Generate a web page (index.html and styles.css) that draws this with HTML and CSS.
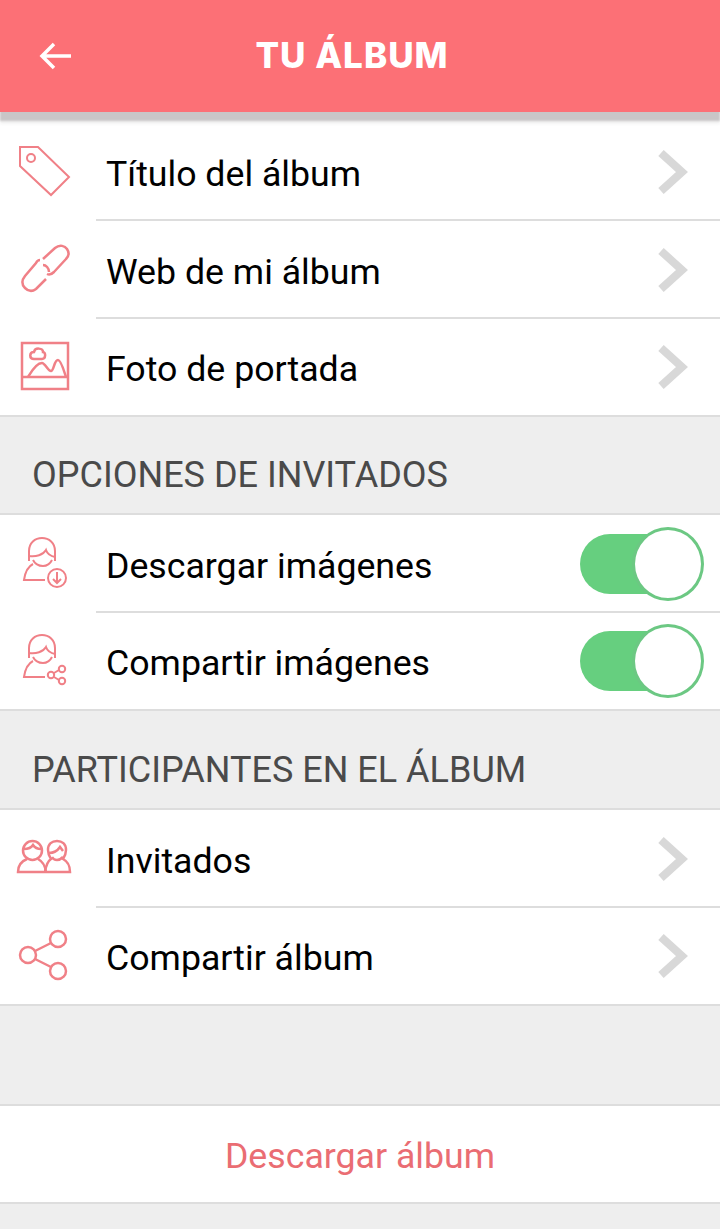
FILE: index.html
```html
<!DOCTYPE html>
<html lang="es">
<head>
  <meta charset="UTF-8" />
  <meta name="viewport" content="width=device-width, initial-scale=1.0" />
  <title>Tu álbum</title>
  <link rel="stylesheet" href="styles.css">
</head>
<body>
  <header class="topbar">
    <svg class="back" viewBox="0 0 34 30"><path d="M32 15H3M15 3L3 15l12 12"/></svg>
    <h1>TU ÁLBUM</h1>
  </header>

  <ul class="list">
    <li class="row">
      <svg class="icon" viewBox="0 0 60 60"><path d="M6 5h18l31 30-18 18L6 24z"/><circle cx="17" cy="16" r="4"/></svg>
      <span class="label">Título del álbum</span>
      <svg class="chevron" viewBox="0 0 32 46"><path d="M4 4l21 19L4 42"/></svg>
    </li>
    <li class="row">
      <svg class="icon icon-bold" viewBox="0 0 60 60"><path d="M29 19L41 8c5-4 10-2 12 1s2 7-1 10L40 32c-2 2-5 3-7 2"/><path d="M29 25c3 0 6 3 6 7"/><path d="M26 20c-2 0-3 1-4 3L11 36c-4 5-3 9 0 12s7 4 11 1l10-10"/></svg>
      <span class="label">Web de mi álbum</span>
      <svg class="chevron" viewBox="0 0 32 46"><path d="M4 4l21 19L4 42"/></svg>
    </li>
    <li class="row">
      <svg class="icon icon-bold" viewBox="0 0 60 60"><path d="M8 6h46v46H8zM8 40h46"/><path d="M14 40c3-5 8-14 14-14 3 0 6 8 9 8 3 0 3-11 7-11 3 0 6 11 8 17"/><path d="M20 22c-5 0-5-7 0-7 1-5 9-4 9 0 3 0 3 7-1 7z"/></svg>
      <span class="label">Foto de portada</span>
      <svg class="chevron" viewBox="0 0 32 46"><path d="M4 4l21 19L4 42"/></svg>
    </li>
  </ul>

  <h2 class="section section-tight">OPCIONES DE INVITADOS</h2>

  <ul class="list">
    <li class="row">
      <svg class="icon icon-thin" viewBox="0 0 60 60"><path d="M15 27V17C15 9 21 4 28 4s13 5 13 13v10"/><path d="M15 22c7 1 14-1 17-6 1 3 4 6 9 7"/><path d="M19 26c2 4 6 6 10 6s7-2 9-6"/><path d="M19 30c-6 3-8 9-9 16h21"/><circle cx="43" cy="44" r="9"/><path d="M43 38v11M39 45l4 4 4-4"/></svg>
      <span class="label">Descargar imágenes</span>
      <span class="toggle"><span class="knob"></span></span>
    </li>
    <li class="row">
      <svg class="icon icon-thin" viewBox="0 0 60 60"><path d="M15 27V17C15 9 21 4 28 4s13 5 13 13v10"/><path d="M15 22c7 1 14-1 17-6 1 3 4 6 9 7"/><path d="M19 26c2 4 6 6 10 6s7-2 9-6"/><path d="M19 30c-6 3-8 9-9 16h21"/><circle cx="48" cy="38" r="3.200"/><circle cx="48" cy="50" r="3.200"/><circle cx="37" cy="44" r="3.200"/><path d="M40 42l5-3M40 46l5 3"/></svg>
      <span class="label">Compartir imágenes</span>
      <span class="toggle"><span class="knob"></span></span>
    </li>
  </ul>

  <h2 class="section">PARTICIPANTES EN EL ÁLBUM</h2>

  <ul class="list">
    <li class="row">
      <svg class="icon icon-bold" viewBox="0 0 60 60"><circle cx="18.500" cy="21.500" r="9.500"/><path d="M10 20c4 0 7-1 9-4 2 3 5 4 8 4"/><path d="M13 30c-5 2-9 6-9 13h52c0-7-3-11-7-13 2-3 3-5 3-9 0-6-4-9-9-9s-9 3-9 9c0 4 1 6 3 9-3 2-5 6-6 13"/><path d="M24 30c4 2 7 6 8 13"/><path d="M35 24c5 0 9-3 11-6l3 4"/><path d="M38 28c1 2 3 3 5 3s4-1 6-3"/></svg>
      <span class="label">Invitados</span>
      <svg class="chevron" viewBox="0 0 32 46"><path d="M4 4l21 19L4 42"/></svg>
    </li>
    <li class="row">
      <svg class="icon icon-bold" viewBox="0 0 60 60"><circle cx="14" cy="29" r="8"/><circle cx="44" cy="13" r="8"/><circle cx="44" cy="45" r="8"/><path d="M21 25l16-8M21 33l16 8"/></svg>
      <span class="label">Compartir álbum</span>
      <svg class="chevron" viewBox="0 0 32 46"><path d="M4 4l21 19L4 42"/></svg>
    </li>
  </ul>

  <div class="spacer"></div>

  <div class="action">Descargar álbum</div>
</body>
</html>
```
FILE: styles.css
```css
* {
  box-sizing: border-box;
}
body {
  margin: 0;
  height: 1229px;
  overflow: hidden;
  background: #eeeeee;
  font-family: 'Roboto', sans-serif;
}
.topbar {
  position: relative;
  z-index: 1;
  display: flex;
  align-items: center;
  justify-content: center;
  height: 112px;
  background: #fc7076;
  box-shadow: 0 9px 2px #c9c6c7, 0 12px 3px rgba(0,0,0,0.05);
}
.topbar h1 {
  margin: 0 16px 2px 0;
  color: #fff;
  font-family: 'Inter', sans-serif;
  font-size: 35px;
  font-weight: 800;
  letter-spacing: 1px;
}
.back {
  position: absolute;
  left: 39px;
  top: 41px;
  width: 34px;
  height: 30px;
  fill: none;
  stroke: #fff;
  stroke-width: 3.5;
}
.list {
  margin: 0;
  padding: 0;
  list-style: none;
  background: #fff;
  border-top: 2px solid #dddddd;
  border-bottom: 2px solid #dddddd;
}
.topbar + .list {
  padding-top: 11px;
  border-top: none;
}
.row {
  position: relative;
  display: flex;
  align-items: center;
  height: 98px;
  padding-left: 14px;
}
.row + .row::before {
  content: "";
  position: absolute;
  left: 96px;
  right: 0;
  top: -2px;
  border-top: 2px solid #dddddd;
}
.list .row:last-child {
  height: 96px;
}
.icon {
  flex: none;
  width: 60px;
  height: 60px;
  fill: none;
  stroke: #f08087;
  stroke-width: 2;
}
.icon-bold {
  stroke-width: 2.500;
}
.icon-thin {
  stroke-width: 2;
}
.label {
  flex: 1;
  margin-left: 32px;
  padding-top: 3px;
  font-size: 35.7px;
  color: #000;
}
.chevron {
  flex: none;
  width: 32px;
  height: 46px;
  margin-right: 31px;
  fill: none;
  stroke: #d8d8d8;
  stroke-width: 8;
}
.toggle {
  position: relative;
  flex: none;
  width: 100px;
  height: 60px;
  margin-right: 40px;
  border-radius: 30px;
  background: #66cf7f;
}
.knob {
  position: absolute;
  left: 52px;
  top: -7px;
  width: 72px;
  height: 74px;
  border: 3px solid #6cc883;
  border-radius: 50%;
  background: #fff;
}
.section {
  display: flex;
  align-items: center;
  height: 97px;
  margin: 0;
  padding: 20px 0 0 32px;
  font-size: 36px;
  font-weight: 400;
  color: #4a4a4a;
}
.section-tight {
  height: 96px;
}
.spacer {
  height: 98px;
}
.action {
  display: flex;
  align-items: center;
  justify-content: center;
  height: 100px;
  padding-top: 3px;
  background: #fff;
  border-top: 2px solid #dddddd;
  border-bottom: 2px solid #dddddd;
  font-size: 35.7px;
  color: #ea6d73;
}
```
